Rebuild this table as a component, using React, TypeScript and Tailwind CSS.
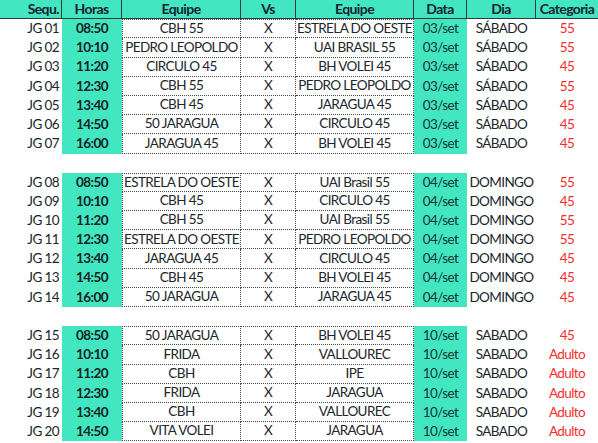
import React from 'react';

type Jogo = {
  seq: string;
  hora: string;
  casa: string;
  fora: string;
  data: string;
  dia: string;
  cat: string;
};

const grupos: Jogo[][] = [
  [
    { seq: 'JG 01', hora: '08:50', casa: 'CBH 55', fora: 'ESTRELA DO OESTE', data: '03/set', dia: 'SÁBADO', cat: '55' },
    { seq: 'JG 02', hora: '10:10', casa: 'PEDRO LEOPOLDO', fora: 'UAI BRASIL 55', data: '03/set', dia: 'SÁBADO', cat: '55' },
    { seq: 'JG 03', hora: '11:20', casa: 'CIRCULO 45', fora: 'BH VOLEI 45', data: '03/set', dia: 'SÁBADO', cat: '45' },
    { seq: 'JG 04', hora: '12:30', casa: 'CBH 55', fora: 'PEDRO LEOPOLDO', data: '03/set', dia: 'SÁBADO', cat: '55' },
    { seq: 'JG 05', hora: '13:40', casa: 'CBH 45', fora: 'JARAGUA 45', data: '03/set', dia: 'SÁBADO', cat: '45' },
    { seq: 'JG 06', hora: '14:50', casa: '50 JARAGUA', fora: 'CIRCULO 45', data: '03/set', dia: 'SÁBADO', cat: '45' },
    { seq: 'JG 07', hora: '16:00', casa: 'JARAGUA 45', fora: 'BH VOLEI 45', data: '03/set', dia: 'SÁBADO', cat: '45' },
  ],
  [
    { seq: 'JG 08', hora: '08:50', casa: 'ESTRELA DO OESTE', fora: 'UAI Brasil 55', data: '04/set', dia: 'DOMINGO', cat: '55' },
    { seq: 'JG 09', hora: '10:10', casa: 'CBH 45', fora: 'CIRCULO 45', data: '04/set', dia: 'DOMINGO', cat: '45' },
    { seq: 'JG 10', hora: '11:20', casa: 'CBH 55', fora: 'UAI Brasil 55', data: '04/set', dia: 'DOMINGO', cat: '55' },
    { seq: 'JG 11', hora: '12:30', casa: 'ESTRELA DO OESTE', fora: 'PEDRO LEOPOLDO', data: '04/set', dia: 'DOMINGO', cat: '55' },
    { seq: 'JG 12', hora: '13:40', casa: 'JARAGUA 45', fora: 'CIRCULO 45', data: '04/set', dia: 'DOMINGO', cat: '45' },
    { seq: 'JG 13', hora: '14:50', casa: 'CBH 45', fora: 'BH VOLEI 45', data: '04/set', dia: 'DOMINGO', cat: '45' },
    { seq: 'JG 14', hora: '16:00', casa: '50 JARAGUA', fora: 'JARAGUA 45', data: '04/set', dia: 'DOMINGO', cat: '45' },
  ],
  [
    { seq: 'JG 15', hora: '08:50', casa: '50 JARAGUA', fora: 'BH VOLEI 45', data: '10/set', dia: 'SABADO', cat: '45' },
    { seq: 'JG 16', hora: '10:10', casa: 'FRIDA', fora: 'VALLOUREC', data: '10/set', dia: 'SABADO', cat: 'Adulto' },
    { seq: 'JG 17', hora: '11:20', casa: 'CBH', fora: 'IPE', data: '10/set', dia: 'SABADO', cat: 'Adulto' },
    { seq: 'JG 18', hora: '12:30', casa: 'FRIDA', fora: 'JARAGUA', data: '10/set', dia: 'SABADO', cat: 'Adulto' },
    { seq: 'JG 19', hora: '13:40', casa: 'CBH', fora: 'VALLOUREC', data: '10/set', dia: 'SABADO', cat: 'Adulto' },
    { seq: 'JG 20', hora: '14:50', casa: 'VITA VOLEI', fora: 'JARAGUA', data: '10/set', dia: 'SABADO', cat: 'Adulto' },
  ],
];

const cols = 'grid grid-cols-[62px_60px_119px_55px_118px_53px_69px_62px]';
const dotted = 'border-dotted border-[#4a4a4a]';

const Linha = ({ j, first }: { j: Jogo; first: boolean }) => (
  <div className={`${cols} h-[19.2px] items-stretch leading-none text-[#20262b]`}>
    <div className="flex items-center justify-end pr-[3px]">{j.seq}</div>
    <div className="flex items-center justify-center bg-[#42e7c2] font-bold text-[#15231f]">{j.hora}</div>
    <div className={`flex items-center justify-center border-l border-r border-b ${dotted} ${first ? 'border-t' : ''}`}>
      {j.casa}
    </div>
    <div className={`flex items-center justify-center border-r border-b ${dotted} ${first ? 'border-t' : ''}`}>
      X
    </div>
    <div className={`flex items-center justify-center border-r border-b ${dotted} ${first ? 'border-t' : ''}`}>
      {j.fora}
    </div>
    <div className="flex items-center justify-center bg-[#42e7c2] text-[#183530]">{j.data}</div>
    <div className="flex items-center justify-center">{j.dia}</div>
    <div className="flex items-center justify-center text-[#f52d2d]">{j.cat}</div>
  </div>
);

export default function App() {
  const headers = ['Sequ.', 'Horas', 'Equipe', 'Vs', 'Equipe', 'Data', 'Dia', 'Categoria'];
  return (
    <div className="w-[598px] h-[443px] overflow-hidden bg-white font-['Lato',sans-serif] text-[13.5px] tracking-[-0.6px] whitespace-nowrap">
      <div className={`${cols} h-[19.2px] bg-[#42e7c2] border-b border-[#2c3b38] font-bold text-[#18242f] text-[14px] leading-none`}>
        {headers.map((h, i) => (
          <div
            key={i}
            className={`flex items-center ${i === 0 ? 'justify-end pr-[2px]' : 'justify-center'} ${
              i < 7 ? 'border-r border-[#2c3b38]' : ''
            }`}
          >
            {h}
          </div>
        ))}
      </div>
      {grupos.map((g, gi) => (
        <div key={gi}>
          {g.map((j, ji) => (
            <Linha key={j.seq} j={j} first={ji === 0} />
          ))}
          {gi < 2 && <div className="h-[19.2px]" />}
        </div>
      ))}
    </div>
  );
}
